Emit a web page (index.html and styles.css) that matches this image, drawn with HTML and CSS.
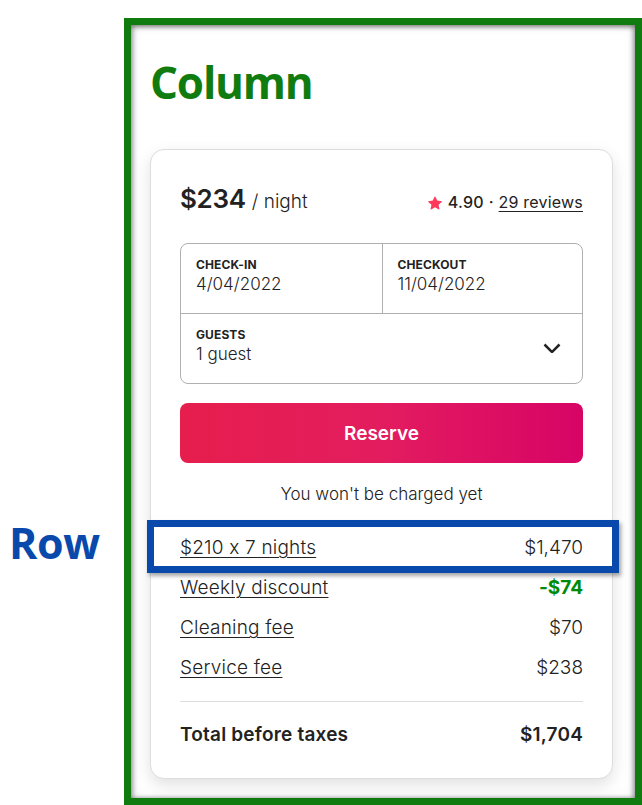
FILE: index.html
```html
<!DOCTYPE html>
<html lang="en">
<head>
<meta charset="utf-8">
<title>Column / Row</title>
<link rel="stylesheet" href="styles.css">
</head>
<body>
<main class="frame">
  <h1 class="frame-title">Column</h1>
  <section class="card">
    <div class="price-row">
      <div class="price"><span class="amount">$234</span><span class="per">/ night</span></div>
      <div class="rating">
        <svg class="star" viewBox="0 0 32 32" aria-hidden="true"><path d="M15.094 1.579l-4.124 8.885-9.86 1.27a1 1 0 0 0-.542 1.736l7.293 6.565-1.965 9.852a1 1 0 0 0 1.483 1.061L16 25.951l8.625 4.997a1 1 0 0 0 1.482-1.06l-1.965-9.853 7.293-6.565a1 1 0 0 0-.541-1.735l-9.86-1.271-4.127-8.885a1 1 0 0 0-1.814 0z"/></svg>
        <span class="score">4.90</span><span class="dot">·</span><a class="reviews" href="#">29 reviews</a>
      </div>
    </div>

    <div class="picker">
      <div class="dates">
        <div class="field">
          <div class="field-label">CHECK-IN</div>
          <div class="field-value">4/04/2022</div>
        </div>
        <div class="field field-split">
          <div class="field-label">CHECKOUT</div>
          <div class="field-value">11/04/2022</div>
        </div>
      </div>
      <div class="field guests">
        <div>
          <div class="field-label">GUESTS</div>
          <div class="field-value">1 guest</div>
        </div>
        <svg class="chevron" viewBox="0 0 32 32" aria-hidden="true"><path d="M28 12 16.707 23.293a1 1 0 0 1-1.414 0L4 12"/></svg>
      </div>
    </div>

    <button class="reserve" type="button">Reserve</button>
    <p class="note">You won't be charged yet</p>

    <div class="lines">
      <div class="line line-highlight">
        <span class="annot-label">Row</span>
        <a class="line-name" href="#">$210 x 7 nights</a><span class="line-value">$1,470</span>
      </div>
      <div class="line">
        <a class="line-name" href="#">Weekly discount</a><span class="line-value discount">-$74</span>
      </div>
      <div class="line">
        <a class="line-name" href="#">Cleaning fee</a><span class="line-value">$70</span>
      </div>
      <div class="line">
        <a class="line-name" href="#">Service fee</a><span class="line-value">$238</span>
      </div>
    </div>

    <div class="total">
      <span>Total before taxes</span><span>$1,704</span>
    </div>
  </section>
</main>
</body>
</html>
```

FILE: styles.css
```css
* { box-sizing: border-box; }

html, body {
  margin: 0;
  padding: 0;
  background: #ffffff;
  overflow: hidden;
}

body {
  font-family: Inter, "Noto Sans", sans-serif;
  font-feature-settings: "calt" 0;
  color: #222222;
}

.frame {
  margin: 18px 0 0 124px;
  width: 518px;
  height: 787px;
  border: 7px solid #107c10;
  padding: 35px 0 0 19px;
  background: #ffffff;
  box-shadow:
    inset 0 3px 4px rgba(0, 0, 0, 0.28),
    inset 3px 0 4px rgba(0, 0, 0, 0.22),
    inset -3px 0 4px rgba(0, 0, 0, 0.22),
    inset 0 0 14px rgba(0, 0, 0, 0.06);
}

.frame-title {
  margin: 0;
  font-family: "Open Sans", sans-serif;
  font-weight: 700;
  font-size: 44px;
  line-height: 44px;
  letter-spacing: -1.2px;
  color: #107c10;
}

.card {
  margin-top: 45px;
  width: 463px;
  border: 1px solid #dddddd;
  border-radius: 14px;
  padding: 33px 29px 31px 29px;
  background: #ffffff;
  box-shadow: 0 6px 16px rgba(0, 0, 0, 0.12);
}

.price-row {
  display: flex;
  justify-content: space-between;
  align-items: baseline;
  height: 32px;
}

.amount {
  font-size: 26px;
  line-height: 32px;
  font-weight: 600;
  letter-spacing: -0.3px;
}

.per {
  font-size: 19px;
  font-weight: 300;
  margin-left: 6px;
}

.rating {
  display: flex;
  align-items: baseline;
  font-size: 16px;
  line-height: 20px;
}

.star {
  width: 14px;
  height: 14px;
  fill: #ff385c;
  margin-right: 6px;
  align-self: center;
  position: relative;
  top: 1px;
}

.score { font-weight: 500; letter-spacing: 0.2px; }

.dot {
  margin: 0 5px;
  font-weight: 500;
}

.reviews {
  color: #222222;
  font-weight: 400;
  letter-spacing: 0.2px;
  text-decoration: underline;
  text-underline-offset: 3px;
  text-decoration-thickness: 1px;
}

.picker {
  margin-top: 28px;
  border: 1px solid #b0b0b0;
  border-radius: 8px;
}

.dates {
  display: grid;
  grid-template-columns: 1fr 1fr;
  border-bottom: 1px solid #b0b0b0;
}

.field {
  padding: 13px 15px 18px 15px;
}

.field-split {
  border-left: 1px solid #b0b0b0;
}

.field-label {
  font-size: 12px;
  line-height: 16px;
  font-weight: 700;
  letter-spacing: 0.1px;
}

.field-value {
  font-size: 17px;
  line-height: 22px;
  font-weight: 300;
}

.guests {
  display: flex;
  justify-content: space-between;
  align-items: center;
  padding-right: 20px;
}

.chevron {
  width: 20px;
  height: 20px;
  fill: none;
  stroke: #222222;
  stroke-width: 4;
  overflow: visible;
  position: relative;
  top: 1px;
}

.reserve {
  display: block;
  width: 100%;
  height: 60px;
  margin-top: 19px;
  border: 0;
  border-radius: 8px;
  background: linear-gradient(to right, #e61e4d 0%, #e31c5f 50%, #d70466 100%);
  color: #ffffff;
  font-family: Inter, "Noto Sans", sans-serif;
  font-size: 19px;
  font-weight: 600;
}

.note {
  margin: 19px 0 0 0;
  text-align: center;
  font-size: 17px;
  line-height: 24px;
  font-weight: 300;
}

.lines {
  margin-top: 22px;
}

.line {
  display: flex;
  justify-content: space-between;
  padding: 8px 0;
  font-size: 19px;
  line-height: 24px;
  font-weight: 300;
}

.line-name {
  color: #222222;
  letter-spacing: 0.2px;
  text-decoration: underline;
  text-underline-offset: 3px;
  text-decoration-thickness: 1px;
}

.discount {
  color: #008a05;
  font-weight: 700;
}

/* annotation overlay for the highlighted row */
.line-highlight {
  position: relative;
}

.line-highlight::after {
  content: "";
  position: absolute;
  top: -8px;
  bottom: -5px;
  left: -33px;
  right: -36px;
  border: 7px solid #0a49ac;
  box-shadow: 2px 3px 4px rgba(0, 0, 0, 0.35);
  pointer-events: none;
}

.annot-label {
  position: absolute;
  left: -171px;
  top: -7px;
  font-family: "Open Sans", sans-serif;
  font-weight: 700;
  font-size: 43px;
  line-height: 43px;
  letter-spacing: -0.4px;
  color: #0a49ac;
}

.total {
  display: flex;
  justify-content: space-between;
  margin-top: 13px;
  padding-top: 21px;
  border-top: 1px solid #dddddd;
  font-size: 19px;
  line-height: 24px;
  font-weight: 600;
  letter-spacing: 0.2px;
}
```
